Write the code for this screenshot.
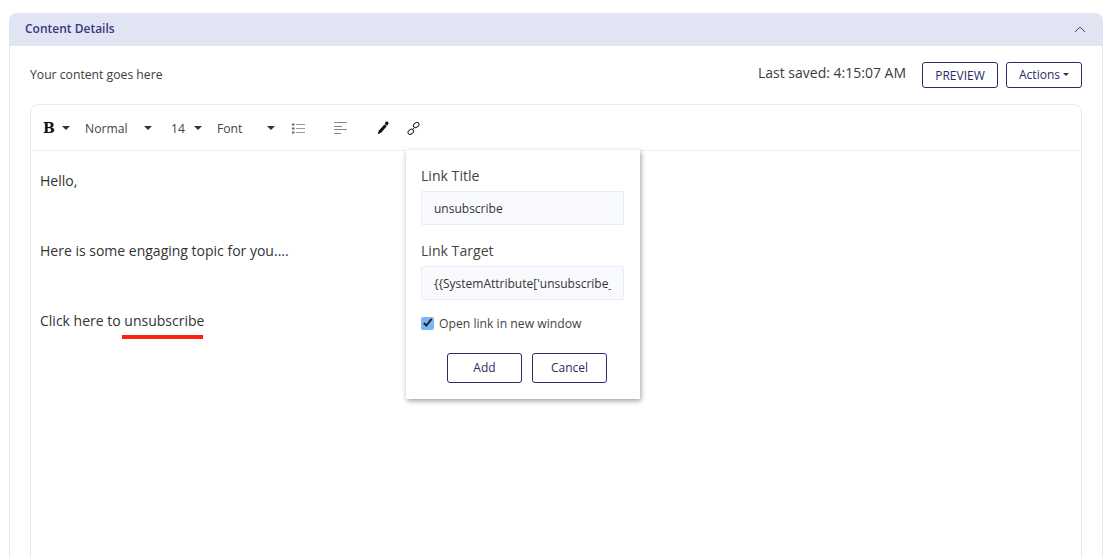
<script>
  const lines = ['Hello,', 'Here is some engaging topic for you....'];
</script>

<div class="page">
  <section class="card">
    <header class="card-head">
      <h2>Content Details</h2>
      <svg class="chev" width="12" height="7" viewBox="0 0 12 7"><path d="M1 6 L6 1 L11 6" fill="none" stroke="#45456f" stroke-width="1"/></svg>
    </header>
    <div class="card-body">
      <div class="topline">
        <span class="hint">Your content goes here</span>
        <div class="right">
          <span class="saved">Last saved: 4:15:07 AM</span>
          <button class="btn preview">PREVIEW</button>
          <button class="btn actions">Actions<i class="caret-sm"></i></button>
        </div>
      </div>
      <div class="editor">
        <div class="toolbar">
          <span class="bold">B</span><i class="caret t1"></i>
          <span class="sel normal">Normal</span><i class="caret t2"></i>
          <span class="sel size">14</span><i class="caret t3"></i>
          <span class="sel font">Font</span><i class="caret t4"></i>
          <svg class="ic list" width="13" height="11" viewBox="0 0 13 11">
            <path d="M0 .5h2.5v2H0zM0 4.5h2.5v2H0zM0 8.5h2.5v2H0z" fill="#666"/>
            <path d="M4 1.5H13M4 5.5H13M4 9.5H13" stroke="#999" stroke-width="1"/>
          </svg>
          <svg class="ic align" width="13" height="12" viewBox="0 0 13 12">
            <path d="M0 .5h13M0 4.5h8M0 7.5h13M0 11.5h7" stroke="#888" stroke-width="1"/>
          </svg>
          <svg class="ic pen" width="12" height="14" viewBox="0 0 12 14">
            <path d="M8.3 1.3a1.6 1.6 0 0 1 2.9 1.7L10.2 4.8 8 3.2z" fill="#111"/>
            <path d="M7.4 3.5l2.3 1.7L4.4 11.6 1.6 13 .8 12.4 1.9 9.6z" fill="#111"/>
          </svg>
          <svg class="ic link" width="13" height="13" viewBox="0 0 13 13" fill="none" stroke="#222" stroke-width="1">
            <rect x="6.2" y="0.9" width="6" height="4.2" rx="2.1" transform="rotate(-40 9.2 3)"/>
            <rect x="0.8" y="7.7" width="6" height="4.2" rx="2.1" transform="rotate(-40 3.8 9.8)"/>
            <path d="M5 8L8 5"/>
          </svg>
        </div>
        <div class="content">
          <p>{lines[0]}</p>
          <p>{lines[1]}</p>
          <p>Click here to <span class="mark">unsubscribe</span></p>
        </div>
        <div class="popup">
          <label class="lbl" for="lt">Link Title</label>
          <input id="lt" class="inp" value="unsubscribe" />
          <label class="lbl second" for="ltg">Link Target</label>
          <input id="ltg" class="inp" value={"{{SystemAttribute['unsubscribe_link']}}"} />
          <label class="check">
            <span class="box"><svg width="14" height="14" viewBox="0 0 14 14"><path d="M3 7l2.8 2.8L11.4 2.6" fill="none" stroke="#222" stroke-width="2.1"/></svg></span>
            Open link in new window
          </label>
          <div class="popup-actions">
            <button class="btn wide">Add</button>
            <button class="btn wide">Cancel</button>
          </div>
        </div>
      </div>
    </div>
  </section>
</div>

<style>
  :global(body) { margin: 0; background: #fff; overflow: hidden; }
  .page {
    height: 558px; overflow: hidden; box-sizing: border-box; padding: 13px 12px 0 9px;
    font-family: "Open Sans", sans-serif; color: #3c3c3c;
  }
  .card { height: 600px; }
  .card-head {
    height: 33px; box-sizing: border-box; background: #e1e4f2; border-radius: 8px 8px 0 0;
    display: flex; align-items: center; justify-content: space-between; padding: 0 17px 2px 16px;
  }
  h2 { margin: 0; font-size: 12px; font-weight: 600; color: #38377f; line-height: 1; }
  .chev { margin-top: 2px; }
  .card-body {
    border: 1px solid #e9e9f8; border-top: 0; height: 560px; padding: 0 20px; 
  }
  .topline { display: flex; justify-content: space-between; height: 58px; box-sizing: border-box; padding-top: 16px; }
  .hint { font-size: 12.2px; line-height: 25px; height: 25px; }
  .right { display: flex; align-items: flex-start; }
  .saved { font-size: 14px; line-height: 22px; margin-right: 16px; }
  .btn {
    box-sizing: border-box; height: 26px; border: 1px solid #2b2a68; border-radius: 3px; background: #fff;
    color: #2b2a68; font: 12px "Open Sans", sans-serif; padding: 0; cursor: pointer;
    display: inline-flex; align-items: center; justify-content: center;
  }
  .preview { width: 76px; margin-right: 8px; }
  .actions { width: 76px; padding-bottom: 2px; }
  .caret-sm { width: 0; height: 0; border: 3px solid transparent; border-top-color: #2b2a68; border-bottom: 0; margin-left: 3px; }
  .editor { position: relative; border: 1px solid #e9e9f8; border-radius: 8px 8px 0 0; height: 500px; }
  .toolbar { position: relative; height: 46px; box-sizing: border-box; padding-top: 1px; border-bottom: 1px solid #eeeef6; display: flex; align-items: center; font-size: 12.2px; color: #444; }
  .bold { font-family: "DejaVu Serif", serif; font-weight: 700; font-size: 14px; color: #111; margin-left: 12px; width: 19px; line-height: 1; }
  .caret { width: 0; height: 0; border: 4px solid transparent; border-top-color: #333; border-bottom: 0; flex: none; }
  .t1 { margin-right: 15px; }
  .sel { flex: none; }
  .normal { width: 59px; }
  .t2 { margin-right: 19px; }
  .size { width: 23px; }
  .t3 { margin-right: 15px; }
  .font { width: 50px; }
  .ic { flex: none; }
  .list { margin-left: 17px; }
  .align { margin-left: 29px; }
  .pen { margin-left: 30px; }
  .link { margin-left: 18px; }
  .content { padding: 20px 9px 0; font-size: 14px; line-height: 19px; color: #333; }
  .content p { margin: 0 0 51px; }
  .mark { position: relative; }
  .mark::after { content: ""; position: absolute; left: -2px; width: 81px; top: 24px; height: 4px; background: #ff2013; }
  .popup {
    position: absolute; left: 375px; top: 45px; width: 234px; height: 249px; box-sizing: border-box;
    background: #fff; padding: 16px 16px 0 15px; box-shadow: 1px 2px 5px rgba(0,0,0,.38);
  }
  .lbl { display: block; font-size: 14.1px; font-weight: 500; line-height: 20px; color: #444; }
  .second { margin-top: 16px; }
  .inp {
    display: block; box-sizing: border-box; width: 203px; height: 34px; margin-top: 5px; padding: 0 12px;
    border: 1px solid #e9ecfa; border-radius: 2px; background: #f9fafe; outline: 0;
    font: 12px "Open Sans", sans-serif; color: #333;
  }
  .check { display: flex; align-items: center; margin-top: 13px; height: 20px; font-size: 12.2px; color: #444; }
  .box { width: 13px; height: 13px; background: #79b7f7; border-radius: 2px; margin-right: 5px; display: flex; align-items: center; justify-content: center; }
  .popup-actions { display: flex; gap: 10px; margin-top: 20px; padding-left: 26px; }
  .wide { width: 75px; height: 30px; padding-bottom: 1px; }
</style>
